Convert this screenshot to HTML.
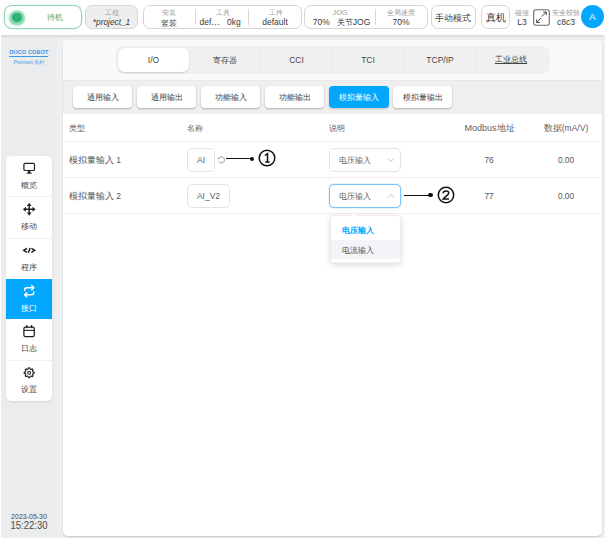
<!DOCTYPE html>
<html><head><meta charset="utf-8">
<style>
*{box-sizing:border-box;margin:0;padding:0}
html,body{width:605px;height:538px;overflow:hidden;background:#eeeff1;font-family:"Liberation Sans",sans-serif;color:#444}
.abs{position:absolute}
.c{position:absolute;text-align:center;white-space:nowrap;overflow:hidden}
.l{position:absolute;white-space:nowrap;overflow:hidden}
#top{left:0;top:0;width:605px;height:34.5px;background:#fff;box-shadow:0 1px 3px rgba(0,0,0,.13)}
.box{position:absolute;top:5px;height:24px;border:1px solid #d6d6d6;border-radius:7px;background:#fff}
.lab{font-size:7.3px;color:#a0a0a0;top:8px;height:9px;line-height:9px}
.val{font-size:8.5px;color:#3a3a3a;top:17px;height:11px;line-height:11px}
.div{position:absolute;top:9px;width:1px;height:16px;background:#d6d6d6}
#panel{left:63px;top:40px;width:539px;height:495.5px;background:#fff;border-radius:5px;box-shadow:0 1px 2px rgba(0,0,0,.16)}
.tab{font-size:8.5px;color:#444;top:53px;height:14px;line-height:14px;width:72px}
.sbtn{position:absolute;top:86px;width:59px;height:22px;border-radius:4px;background:#fff;box-shadow:0 1px 2px rgba(0,0,0,.28);font-size:8.3px;line-height:23px;text-align:center;color:#3a3a3a;white-space:nowrap;overflow:hidden}
.th{font-size:8.3px;color:#606060;top:122px;height:12px;line-height:12px}
.td{font-size:8.3px;color:#555;height:12px;line-height:12px}
.hr{position:absolute;left:63px;width:539px;height:1px;background:#efeff1}
.inp{position:absolute;height:24px;border:1px solid #e2e3e8;border-radius:5px;background:#fff;font-size:8.3px;line-height:22px;color:#606060;white-space:nowrap;overflow:hidden}
.nav{position:absolute;left:6px;width:46px;height:41px}
.nav .t{position:absolute;left:0;width:46px;top:24.1px;height:11px;line-height:11px;font-size:8px;text-align:center;color:#4a4a4a;white-space:nowrap;overflow:hidden}
.nav svg{position:absolute;left:16px;top:5px;width:14px;height:14px}
.nd{position:absolute;left:6px;width:46px;height:1px;background:#f0f0f0}
</style></head><body>
<div class="abs" style="left:0;top:34px;width:57px;height:504px;background:#ebecee"></div>
<div class="abs" id="top"></div>
<div class="abs" style="left:0;top:35px;width:1px;height:503px;background:#fff"></div>

<!-- status -->
<div class="box" style="left:4px;width:77.5px;border-color:#93d4b3;border-radius:8px;box-shadow:0 0 2px rgba(45,181,115,.3)"></div>
<div class="abs" style="left:12px;top:12.7px;width:9.6px;height:9.6px;border-radius:50%;background:#2bb474;box-shadow:0 .5px 1.6px 3.1px rgba(45,181,115,.55)"></div>
<div class="c" style="left:40px;top:12px;width:30px;height:12px;line-height:12px;font-size:8px;color:#4aa97c">待机</div>

<!-- project -->
<div class="box" style="left:85px;width:53.3px;background:#eeeeee;border-color:#d6d6d6"></div>
<div class="c lab" style="left:85.5px;width:52px">工程</div>
<div class="c val" style="left:85.5px;width:52px;font-style:italic;font-size:8.3px">*project_1</div>

<!-- group 1 -->
<div class="box" style="left:143px;width:158.5px"></div>
<div class="c lab" style="left:145px;width:48px">安装</div>
<div class="c val" style="left:145px;width:48px;font-size:8.2px;top:17.6px">竖装</div>
<div class="div" style="left:195px"></div>
<div class="c lab" style="left:198px;width:50px">工具</div>
<div class="c val" style="left:194.2px;width:52px">def<span style="letter-spacing:.5px">...</span>&nbsp;&nbsp;&nbsp;0kg</div>
<div class="div" style="left:248px"></div>
<div class="c lab" style="left:250.5px;width:50px">工件</div>
<div class="c val" style="left:250px;width:50px">default</div>

<!-- group 2 -->
<div class="box" style="left:304px;width:123.5px"></div>
<div class="c lab" style="left:306px;width:68px">JOG</div>
<div class="c val" style="left:307.5px;width:68px">70%&nbsp;&nbsp;&nbsp;<span style="font-size:8px">关节</span>JOG</div>
<div class="div" style="left:375px"></div>
<div class="c lab" style="left:376px;width:50px;font-size:7px">全局速度</div>
<div class="c val" style="left:376px;width:50px">70%</div>

<div class="box" style="left:431px;width:45px;border-radius:6.5px"></div>
<div class="c" style="left:431.3px;top:12.3px;width:43px;height:12px;line-height:12px;font-size:8.5px;color:#3a3a3a">手动模式</div>
<div class="box" style="left:480.5px;width:29.3px;border-radius:6.5px"></div>
<div class="c" style="left:482px;top:11px;width:28px;height:14px;line-height:14px;font-size:9.5px;color:#333">真机</div>
<div class="c lab" style="left:510px;width:24px;top:8.2px;font-size:7px">碰撞</div>
<div class="c val" style="left:510px;width:24px;top:16.5px">L3</div>
<svg class="abs" style="left:533px;top:9px" width="17" height="17" viewBox="0 0 17 17"><rect x=".7" y=".7" width="15.6" height="15.6" rx="2.2" fill="#fff" stroke="#6a6a6a" stroke-width="1.1"/><path d="M8.8 7.5 L13.2 3.1 M10.2 3 H13.3 V6.1 M8 8.9 L3.8 13.4 M3.7 10.4 V13.5 H6.8" fill="none" stroke="#3a3a3a" stroke-width=".95"/></svg>
<div class="c lab" style="left:549px;width:34px;top:7.8px;font-size:7px">安全校验</div>
<div class="c val" style="left:550px;width:32px;top:16.5px">c8c3</div>
<div class="abs" style="left:581px;top:5px;width:23px;height:23px;border-radius:50%;background:#03a7fe"></div>
<div class="c" style="left:581.5px;top:10.5px;width:22px;height:12px;line-height:12px;font-size:9.5px;color:#fff">A</div>

<!-- logo -->
<div class="c" style="left:4px;top:48px;width:50px;height:9px;line-height:9px;font-size:5.6px;font-weight:bold;color:#3b98e6;letter-spacing:.1px">DUCO COBOT</div>
<div class="abs" style="left:9.3px;top:56.4px;width:38.7px;height:1px;background:#3b98e6"></div>
<div class="c" style="left:4px;top:58.5px;width:50px;height:8px;line-height:8px;font-size:4.8px;color:#3b98e6">Premium 系列</div>

<!-- nav -->
<div class="abs" style="left:6px;top:156px;width:46px;height:244.7px;border-radius:5.5px;background:#fff;box-shadow:0 1px 2px rgba(0,0,0,.10)"></div>
<div class="nav" style="top:156px"><svg viewBox="0 0 14 14"><rect x="1.9" y="2.3" width="10.6" height="7.2" rx="1.3" fill="none" stroke="#222" stroke-width="1.2"/><path d="M5.4 12.3 L6.3 9.9 H8.1 L9 12.3Z" fill="#222"/><path d="M4.6 12.2H9.8" stroke="#222" stroke-width=".9"/></svg><div class="t">概览</div></div>
<div class="nd" style="top:196.3px"></div>
<div class="nav" style="top:196.8px"><svg viewBox="0 0 14 14"><path d="M7.2 3V11.6M2.9 7.3H11.5" stroke="#222" stroke-width="1.45" fill="none"/><path d="M7.2 0.9 L9.7 4 H4.7Z M7.2 13.7 L9.7 10.6 H4.7Z M0.8 7.3 L3.9 4.8 V9.8Z M13.6 7.3 L10.5 4.8 V9.8Z" fill="#222"/></svg><div class="t">移动</div></div>
<div class="nd" style="top:237.5px"></div>
<div class="nav" style="top:237.6px"><svg viewBox="0 0 14 14"><path d="M5 5.3 L1.7 7.3 L5 9.3 M8.1 4.9 L6.3 9.7 M9.4 5.3 L12.7 7.3 L9.4 9.3" fill="none" stroke="#1a1a1a" stroke-width="1.45"/></svg><div class="t">程序</div></div>
<div class="abs" style="left:6px;top:279px;width:46px;height:40px;background:#03a7fe"></div>
<div class="nav" style="top:278.6px"><svg viewBox="0 0 14 14"><path d="M2.6 6.6V5.9A2.2 2.2 0 0 1 4.8 3.7H11.6M9.6 1.5L11.9 3.7L9.6 5.9M11.8 7.8V8.5A2.2 2.2 0 0 1 9.6 10.7H2.8M4.8 8.5L2.5 10.7L4.8 12.9" stroke="#fff" stroke-width="1.35" fill="none" stroke-linecap="round" stroke-linejoin="round"/></svg><div class="t" style="color:#fff">接口</div></div>
<div class="nav" style="top:319.2px"><svg viewBox="0 0 14 14"><rect x="1.9" y="3" width="10.4" height="9.6" rx="1.7" fill="none" stroke="#222" stroke-width="1.25"/><path d="M1.9 6.4H12.3" stroke="#222" stroke-width="1.1" fill="none"/><path d="M4.8 1.7V3.6M9.6 1.7V3.6" stroke="#222" stroke-width="1.4" stroke-linecap="round" fill="none"/></svg><div class="t">日志</div></div>
<div class="nd" style="top:360.2px"></div>
<div class="nav" style="top:360px"><svg viewBox="0 0 14 14"><path d="M6.56 2.78 L7.74 2.78 L8.06 3.96 L9.19 4.42 L10.25 3.82 L11.08 4.65 L10.48 5.71 L10.94 6.84 L12.12 7.16 L12.12 8.34 L10.94 8.66 L10.48 9.79 L11.08 10.85 L10.25 11.68 L9.19 11.08 L8.06 11.54 L7.74 12.72 L6.56 12.72 L6.24 11.54 L5.11 11.08 L4.05 11.68 L3.22 10.85 L3.82 9.79 L3.36 8.66 L2.18 8.34 L2.18 7.16 L3.36 6.84 L3.82 5.71 L3.22 4.65 L4.05 3.82 L5.11 4.42 L6.24 3.96Z" fill="none" stroke="#222" stroke-width="1.15" stroke-linejoin="round"/><circle cx="7.15" cy="7.75" r="1.45" fill="none" stroke="#222" stroke-width="1.05"/></svg><div class="t">设置</div></div>

<!-- date -->
<div class="c" style="left:4px;top:512px;width:50px;height:9px;line-height:9px;font-size:7px;color:#4a4a4a">2023-05-30</div>
<div class="c" style="left:4px;top:519.4px;width:50px;height:13px;line-height:13px;font-size:10.2px;color:#4a4a4a;transform:scaleX(.93)">15:22:30</div>

<!-- panel -->
<div class="abs" id="panel"></div>
<div class="abs" style="left:63px;top:40px;width:539px;height:40px;background:#fafafa;border-radius:5px 5px 0 0"></div>
<div class="abs" style="left:116px;top:46px;width:434px;height:27.6px;border-radius:8px;background:#f0f0f0"></div>
<div class="abs" style="left:118px;top:47.5px;width:70.5px;height:24px;border-radius:7px;background:#fff;box-shadow:0 1px 2px rgba(0,0,0,.15)"></div>
<div class="c tab" style="left:117.5px">I/O</div>
<div class="c tab" style="left:189px;font-size:8.2px;top:53.8px">寄存器</div>
<div class="c tab" style="left:260.5px">CCI</div>
<div class="c tab" style="left:332px">TCI</div>
<div class="c tab" style="left:404px">TCP/IP</div>
<div class="c tab" style="left:475px;font-size:8px;text-decoration:underline">工业总线</div>
<div class="abs" style="left:260px;top:48px;width:1px;height:23px;background:#e6e6e6"></div>
<div class="abs" style="left:332px;top:48px;width:1px;height:23px;background:#e6e6e6"></div>
<div class="abs" style="left:404px;top:48px;width:1px;height:23px;background:#e6e6e6"></div>
<div class="abs" style="left:475px;top:48px;width:1px;height:23px;background:#e6e6e6"></div>

<div class="abs" style="left:63px;top:79.6px;width:539px;height:34.2px;background:#efefef;box-shadow:inset 0 1px 1px rgba(0,0,0,.03)"></div>
<div class="sbtn" style="left:73px">通用输入</div>
<div class="sbtn" style="left:137px">通用输出</div>
<div class="sbtn" style="left:201px">功能输入</div>
<div class="sbtn" style="left:265px">功能输出</div>
<div class="sbtn" style="left:329px;width:59.5px;background:#03a7fe;color:#fff;box-shadow:0 1px 2px rgba(0,0,0,.18)">模拟量输入</div>
<div class="sbtn" style="left:393px">模拟量输出</div>

<!-- table -->
<div class="l th" style="left:69px">类型</div>
<div class="l th" style="left:187px">名称</div>
<div class="l th" style="left:329px">说明</div>
<div class="c th" style="left:459px;width:61px;font-size:9px">Modbus地址</div>
<div class="c th" style="left:536px;width:60px;font-size:8.5px">数据(mA/V)</div>
<div class="hr" style="top:141px"></div>
<div class="hr" style="top:177.3px"></div>
<div class="hr" style="top:213.2px"></div>

<div class="l td" style="left:69px;top:154.2px;font-size:8.5px">模拟量输入 1</div>
<div class="inp" style="left:187px;top:148px;width:28px;text-align:center;font-size:8.7px">AI</div>
<svg class="abs" style="left:216.7px;top:155.5px" width="9" height="9" viewBox="0 0 9 9"><path d="M1.68 2.73 A3 3 0 1 1 1.8 5.5" fill="none" stroke="#8c8c8c" stroke-width=".85"/><path d="M0.8 1.7 L2.7 2.1 L1.4 3.5Z" fill="#777"/></svg>
<div class="abs" style="left:225.8px;top:158.1px;width:26px;height:1px;background:#111"></div>
<div class="abs" style="left:250.1px;top:156.5px;width:4.3px;height:4.3px;border-radius:50%;background:#111"></div>
<svg class="abs" style="left:258.1px;top:149.2px" width="18" height="18" viewBox="0 0 18 18"><circle cx="9" cy="9" r="7.8" fill="none" stroke="#111" stroke-width="1.5"/><path d="M6.9 6.5L9.5 4.7V12.8M7.2 13H11.6" fill="none" stroke="#111" stroke-width="1.5"/></svg>
<div class="inp" style="left:329.2px;top:148px;width:71.7px;padding-left:8.5px;font-size:8.35px">电压输入</div>
<svg class="abs" style="left:386.5px;top:157px" width="8" height="6" viewBox="0 0 8 6"><path d="M1 1.5L4 4.5L7 1.5" fill="none" stroke="#b8b8b8" stroke-width=".9"/></svg>
<div class="c td" style="left:474px;top:154px;width:30px">76</div>
<div class="c td" style="left:551px;top:154px;width:30px">0.00</div>

<div class="l td" style="left:69px;top:190.2px;font-size:8.5px">模拟量输入 2</div>
<div class="inp" style="left:187px;top:184px;width:43px;text-align:center;font-size:8.5px">AI_V2</div>
<div class="inp" style="left:329.2px;top:184px;width:71.7px;padding-left:8.5px;font-size:8.35px;border-color:#7cc4f6;box-shadow:0 0 1.5px #7cc4f6">电压输入</div>
<svg class="abs" style="left:386.5px;top:193px" width="8" height="6" viewBox="0 0 8 6"><path d="M1 4.5L4 1.5L7 4.5" fill="none" stroke="#b8b8b8" stroke-width=".9"/></svg>
<div class="abs" style="left:404px;top:194.7px;width:26px;height:1px;background:#111"></div>
<div class="abs" style="left:428.3px;top:193.1px;width:4.3px;height:4.3px;border-radius:50%;background:#111"></div>
<svg class="abs" style="left:436.5px;top:186.1px" width="18" height="18" viewBox="0 0 18 18"><circle cx="9" cy="9" r="7.7" fill="none" stroke="#111" stroke-width="1.5"/><path d="M6.2 7.2C6.2 4.2 11.7 4.2 11.7 7.1C11.7 9 8.4 10.2 6.2 12.9H12" fill="none" stroke="#111" stroke-width="1.5"/></svg>
<div class="c td" style="left:474px;top:190px;width:30px">77</div>
<div class="c td" style="left:551px;top:190px;width:30px">0.00</div>

<!-- dropdown -->
<div class="abs" style="left:330px;top:215.4px;width:70.5px;height:47.6px;border-radius:3px;background:#fff;border:1px solid #eeeeee;box-shadow:0 2px 6px rgba(0,0,0,.14)"></div>
<svg class="abs" style="left:350px;top:211.6px" width="9" height="5" viewBox="0 0 9 5"><path d="M0.5 4.6 L4.3 0.9 L8.1 4.6" fill="#fff" stroke="#e4e4e4" stroke-width=".8"/><rect x="1.2" y="4.2" width="6.2" height="1" fill="#fff"/></svg>
<div class="abs" style="left:331px;top:240px;width:68.5px;height:19px;background:#f3f4f7"></div>
<div class="l" style="left:342px;top:223.8px;height:12px;line-height:12px;font-size:8.4px;font-weight:bold;color:#03a7fe">电压输入</div>
<div class="l" style="left:342px;top:244.4px;height:12px;line-height:12px;font-size:8.4px;color:#505050">电流输入</div>
</body></html>
